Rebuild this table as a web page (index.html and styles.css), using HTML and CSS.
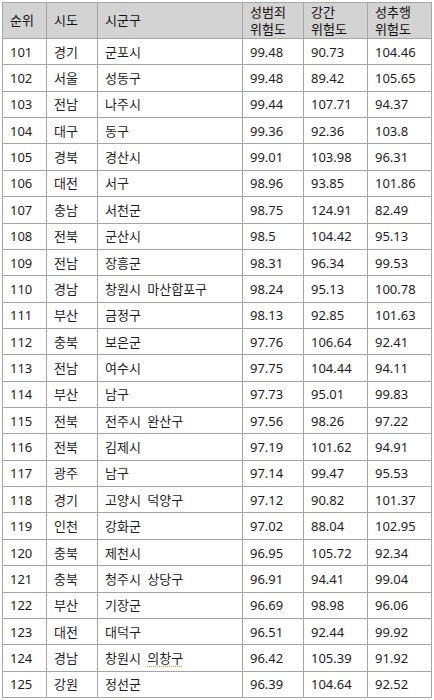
FILE: index.html
```html
<!DOCTYPE html>
<html lang="ko">
<head>
<meta charset="utf-8">
<link rel="stylesheet" href="styles.css">
</head>
<body>
<table class="risk">
<colgroup>
<col class="c-rank"><col class="c-sido"><col class="c-sgg"><col class="c-v1"><col class="c-v2"><col class="c-v3">
</colgroup>
<thead>
<tr><th>순위</th><th>시도</th><th>시군구</th><th>성범죄<br>위험도</th><th>강간<br>위험도</th><th>성추행<br>위험도</th></tr>
</thead>
<tbody>
<tr><td>101</td><td>경기</td><td>군포시</td><td>99.48</td><td>90.73</td><td>104.46</td></tr>
<tr><td>102</td><td>서울</td><td>성동구</td><td>99.48</td><td>89.42</td><td>105.65</td></tr>
<tr><td>103</td><td>전남</td><td>나주시</td><td>99.44</td><td>107.71</td><td>94.37</td></tr>
<tr><td>104</td><td>대구</td><td>동구</td><td>99.36</td><td>92.36</td><td>103.8</td></tr>
<tr><td>105</td><td>경북</td><td>경산시</td><td>99.01</td><td>103.98</td><td>96.31</td></tr>
<tr><td>106</td><td>대전</td><td>서구</td><td>98.96</td><td>93.85</td><td>101.86</td></tr>
<tr><td>107</td><td>충남</td><td>서천군</td><td>98.75</td><td>124.91</td><td>82.49</td></tr>
<tr><td>108</td><td>전북</td><td>군산시</td><td>98.5</td><td>104.42</td><td>95.13</td></tr>
<tr><td>109</td><td>전남</td><td>장흥군</td><td>98.31</td><td>96.34</td><td>99.53</td></tr>
<tr><td>110</td><td>경남</td><td>창원시 마산합포구</td><td>98.24</td><td>95.13</td><td>100.78</td></tr>
<tr><td>111</td><td>부산</td><td>금정구</td><td>98.13</td><td>92.85</td><td>101.63</td></tr>
<tr><td>112</td><td>충북</td><td>보은군</td><td>97.76</td><td>106.64</td><td>92.41</td></tr>
<tr><td>113</td><td>전남</td><td>여수시</td><td>97.75</td><td>104.44</td><td>94.11</td></tr>
<tr><td>114</td><td>부산</td><td>남구</td><td>97.73</td><td>95.01</td><td>99.83</td></tr>
<tr><td>115</td><td>전북</td><td>전주시 완산구</td><td>97.56</td><td>98.26</td><td>97.22</td></tr>
<tr><td>116</td><td>전북</td><td>김제시</td><td>97.19</td><td>101.62</td><td>94.91</td></tr>
<tr><td>117</td><td>광주</td><td>남구</td><td>97.14</td><td>99.47</td><td>95.53</td></tr>
<tr><td>118</td><td>경기</td><td>고양시 덕양구</td><td>97.12</td><td>90.82</td><td>101.37</td></tr>
<tr><td>119</td><td>인천</td><td>강화군</td><td>97.02</td><td>88.04</td><td>102.95</td></tr>
<tr><td>120</td><td>충북</td><td>제천시</td><td>96.95</td><td>105.72</td><td>92.34</td></tr>
<tr><td>121</td><td>충북</td><td>청주시 상당구</td><td>96.91</td><td>94.41</td><td>99.04</td></tr>
<tr><td>122</td><td>부산</td><td>기장군</td><td>96.69</td><td>98.98</td><td>96.06</td></tr>
<tr><td>123</td><td>대전</td><td>대덕구</td><td>96.51</td><td>92.44</td><td>99.92</td></tr>
<tr><td>124</td><td>경남</td><td>창원시 <span class="spell">의창구</span></td><td>96.42</td><td>105.39</td><td>91.92</td></tr>
<tr><td>125</td><td>강원</td><td>정선군</td><td>96.39</td><td>104.64</td><td>92.52</td></tr>
</tbody>
</table>
</body>
</html>
```
FILE: styles.css
```css
html, body {
  margin: 0;
  padding: 0;
  background: #ffffff;
}
body {
  padding: 2px 0 0 2px;
  font-family: "Noto Sans", "Noto Sans CJK KR", sans-serif;
  font-size: 13px;
  color: #1e1e1e;
}
.risk {
  border-collapse: collapse;
  table-layout: fixed;
  width: 429px;
}
.c-rank { width: 44px; }
.c-sido { width: 51px; }
.c-sgg { width: 145px; }
.c-v1 { width: 61px; }
.c-v2 { width: 64px; }
.c-v3 { width: 64px; }
.risk th, .risk td {
  border: 1px solid #a6a6a6;
  padding: 0 0 0 7px;
  text-align: left;
  vertical-align: middle;
  white-space: nowrap;
  overflow: hidden;
  word-spacing: 3px;
}
.risk th {
  background: #d3d3d3;
  font-weight: normal;
  height: 35px;
  line-height: 17px;
  color: #111;
}
.risk td {
  height: 25.36px;
  line-height: 16px;
}
.spell {
  text-decoration: underline dotted #c9a53a;
  text-underline-offset: 3px;
}
```
